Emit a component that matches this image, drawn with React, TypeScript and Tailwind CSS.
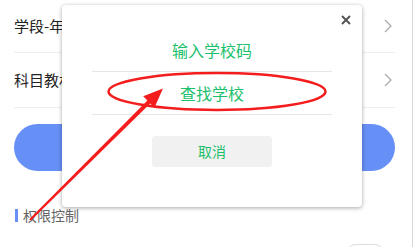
import React from "react";

const Chevron = () => (
  <svg width="8" height="14" viewBox="0 0 8 14" fill="none" className="shrink-0">
    <path d="M1 1 L7 7 L1 13" stroke="#a9a9a9" strokeWidth="1.2" />
  </svg>
);

export default function App() {
  return (
    <div
      className="relative w-[413px] h-[247px] overflow-hidden bg-white"
      style={{ fontFamily: '"Noto Sans CJK SC", "Noto Sans", sans-serif' }}
    >
      {/* page */}
      <div className="flex flex-col pl-[14px] pr-[17px] border-r border-[#d6d6d6] h-full">
        <div className="shrink-0 flex items-center justify-between h-[53px] border-b border-[#eeeeee] pr-[3px]">
          <span className="text-[15px] text-[#222]">学段-年级</span>
          <Chevron />
        </div>
        <div className="shrink-0 flex items-center justify-between h-[55px] border-b border-[#eeeeee] pr-[3px]">
          <span className="text-[15px] text-[#222]">科目教材</span>
          <Chevron />
        </div>
        <div className="shrink-0 mt-[16px] h-[47px] rounded-full bg-[#6690f5]" />
        <div className="shrink-0 mt-[37px] flex items-center gap-[5px] h-[14px]">
          <div className="ml-[1px] w-[3px] h-[13px] bg-[#6690f5]" />
          <span className="text-[14px] leading-none text-[#666]">权限控制</span>
        </div>
        <div className="shrink-0 mt-[22px] flex justify-end pr-[10px]">
          <div className="shrink-0 w-[40px] h-[22px] rounded-full border border-[#dcdcdc]" />
        </div>
      </div>

      {/* modal */}
      <div className="absolute left-[62px] top-[5px] w-[300px] h-[202px] rounded-[4px] bg-white shadow-[0_1px_4px_rgba(0,0,0,0.35)] flex flex-col items-center">
        <button className="absolute right-[11px] top-[10px] w-[10px] h-[10px]">
          <svg width="10" height="10" viewBox="0 0 10 10">
            <path d="M1 1 L9 9 M9 1 L1 9" stroke="#555" strokeWidth="2" />
          </svg>
        </button>
        <div className="mt-[24px] w-[240px] h-[43px] flex items-center justify-center border-b border-[#e6e6e6] text-[16px] text-[#1bbf6c]">
          输入学校码
        </div>
        <div className="w-[240px] h-[43px] flex items-center justify-center border-b border-[#e6e6e6] text-[16px] text-[#1bbf6c]">
          查找学校
        </div>
        <div className="mt-[21px] w-[120px] h-[31px] rounded-[4px] bg-[#f1f1f1] flex items-center justify-center text-[14px] text-[#1bbf6c]">
          取消
        </div>
      </div>

      {/* annotation */}
      <svg className="absolute left-0 top-0 pointer-events-none" width="413" height="247" viewBox="0 0 413 247">
        <ellipse cx="217" cy="91.5" rx="108.5" ry="18.5" fill="none" stroke="#f41d1d" strokeWidth="2.5" />
        <polygon
          points="29,219.5 147.4,100.6 143.2,96.3 163,88.5 154.4,107.7 150.2,103.4 31,220.5"
          fill="#f41d1d"
        />
      </svg>
    </div>
  );
}
